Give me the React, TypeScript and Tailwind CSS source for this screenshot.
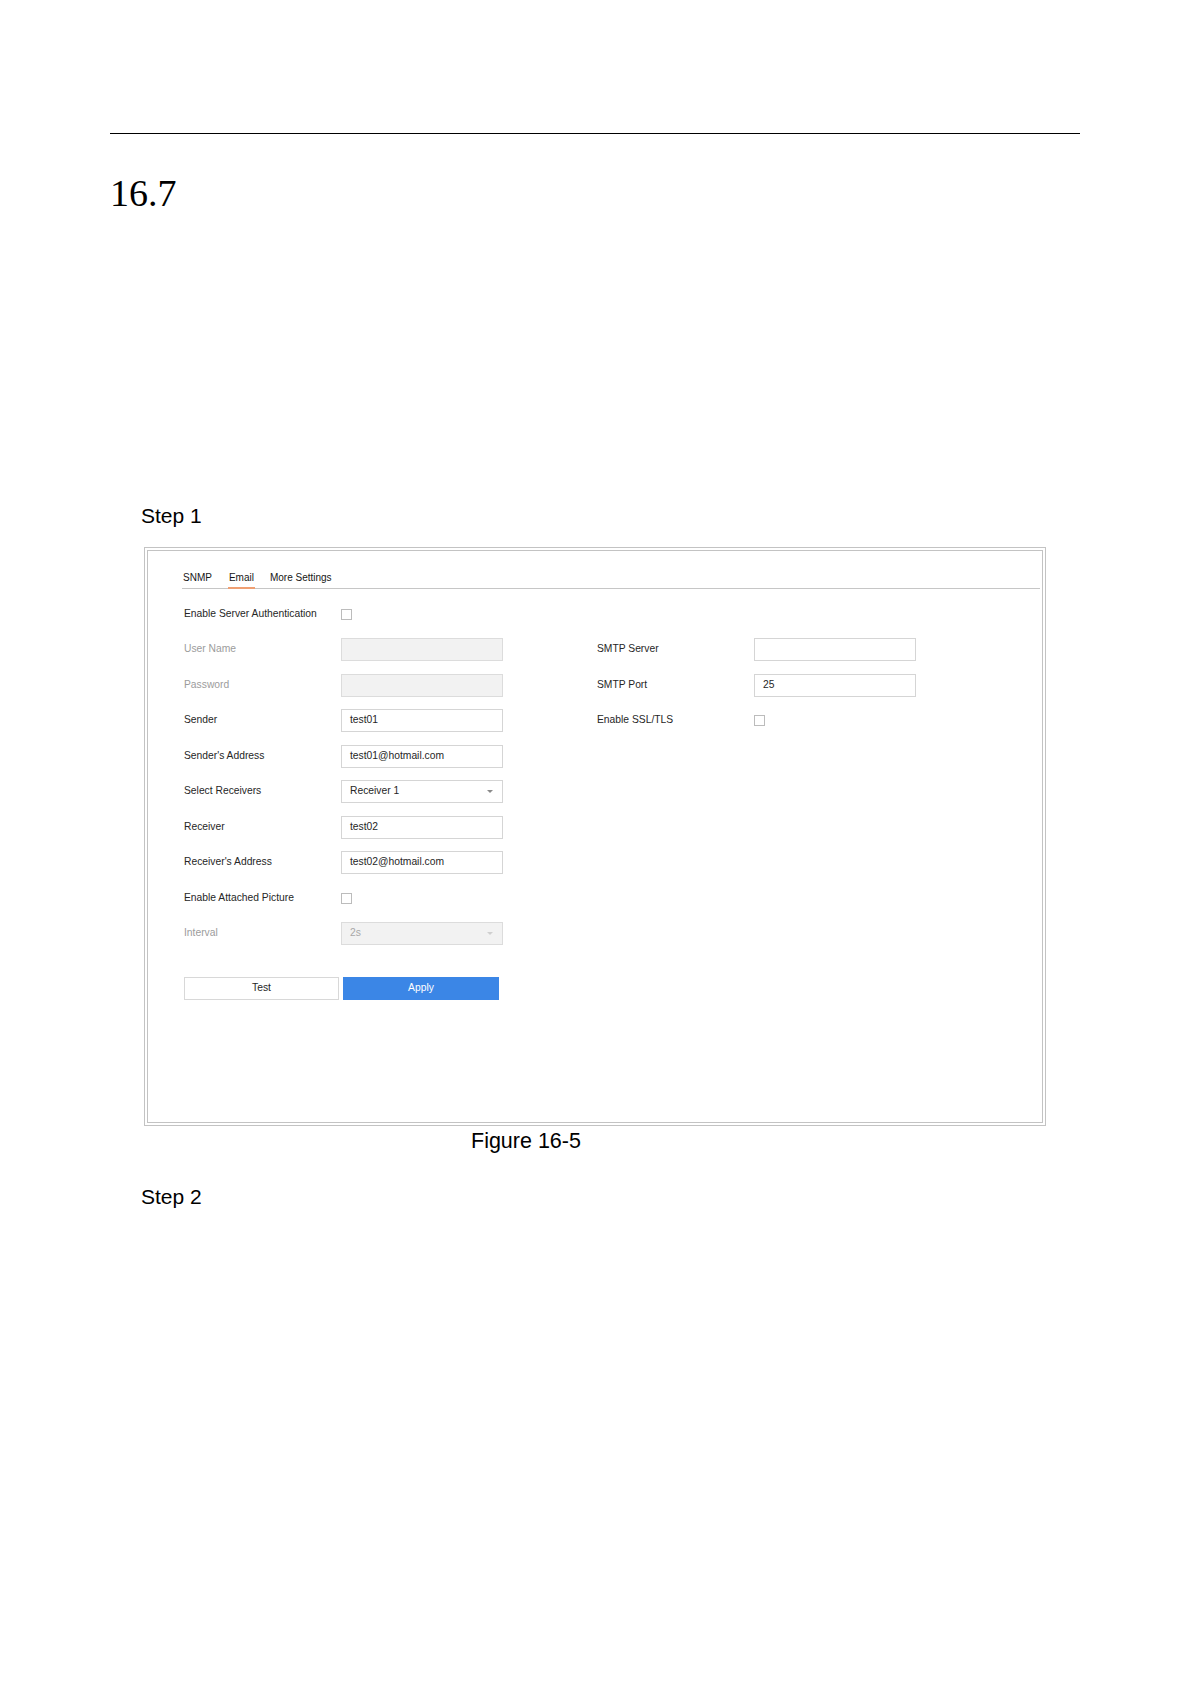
import { type ReactNode } from "react";

const sans = "font-['Liberation_Sans',Arial,sans-serif]";

function Label({ children, muted }: { children: ReactNode; muted?: boolean }) {
  return (
    <span className={`w-[157px] shrink-0 text-[10.3px] leading-none ${muted ? "text-[#9c9c9c]" : "text-[#262626]"}`}>
      {children}
    </span>
  );
}

function Field({ value, disabled, select }: { value?: string; disabled?: boolean; select?: boolean }) {
  return (
    <div
      className={`flex h-[23px] w-[162px] items-center justify-between border pl-[8px] pr-[9px] text-[10.3px] leading-none ${
        disabled ? "border-[#dcdcdc] bg-[#f2f2f2] text-[#a8a8a8]" : "border-[#d5d5d5] bg-white text-[#262626]"
      }`}
    >
      <span>{value}</span>
      {select && (
        <span
          className={`h-0 w-0 border-x-[3px] border-t-[3px] border-x-transparent ${
            disabled ? "border-t-[#cfcfcf]" : "border-t-[#8a8a8a]"
          }`}
        />
      )}
    </div>
  );
}

function Check() {
  return <div className="h-[11px] w-[11px] border border-[#bcbcbc] bg-white" />;
}

function Row({ children }: { children?: ReactNode }) {
  return <div className="flex h-[23px] items-center">{children}</div>;
}

export default function App() {
  return (
    <div className="min-h-[1684px] bg-white pl-[110px] pr-[111px] pt-[133px] text-black">
      <div className="border-t border-black" />

      <h1 className="mt-[40px] font-['Liberation_Serif','Times_New_Roman',serif] text-[38px] font-normal leading-none">
        16.7
      </h1>

      <p className={`${sans} ml-[31px] mt-[293px] text-[21px] leading-none`}>Step 1</p>

      {/* Figure 16-5: Email settings panel */}
      <div className="ml-[34px] mt-[21px] h-[579px] w-[902px] border border-[#c3c3c3] p-[2px]">
        <div className={`${sans} h-full border border-[#c3c3c3] pt-[22px]`}>
          <div className="ml-[34px] mr-[2px] flex items-end border-b border-[#c6c6c6] text-[10px] leading-none text-[#161616]">
            <span className="ml-[1px] mr-[16px] pb-[5px]">SNMP</span>
            <span className="-mb-px mr-[15px] border-b-2 border-[#ef9f72] px-[1px] pb-[4px]">Email</span>
            <span className="pb-[5px]">More Settings</span>
          </div>

          <div className="ml-[36px] mt-[13.5px] flex">
            <div className="flex w-[413px] flex-col gap-[12.5px]">
              <Row>
                <Label>Enable Server Authentication</Label>
                <Check />
              </Row>
              <Row>
                <Label muted>User Name</Label>
                <Field disabled />
              </Row>
              <Row>
                <Label muted>Password</Label>
                <Field disabled />
              </Row>
              <Row>
                <Label>Sender</Label>
                <Field value="test01" />
              </Row>
              <Row>
                <Label>Sender's Address</Label>
                <Field value="test01@hotmail.com" />
              </Row>
              <Row>
                <Label>Select Receivers</Label>
                <Field value="Receiver 1" select />
              </Row>
              <Row>
                <Label>Receiver</Label>
                <Field value="test02" />
              </Row>
              <Row>
                <Label>Receiver's Address</Label>
                <Field value="test02@hotmail.com" />
              </Row>
              <Row>
                <Label>Enable Attached Picture</Label>
                <Check />
              </Row>
              <Row>
                <Label muted>Interval</Label>
                <Field value="2s" disabled select />
              </Row>

              <div className="mt-[19.5px] flex gap-[4px] text-[10.3px] leading-none">
                <button className="flex h-[23px] w-[155px] items-center justify-center border border-[#d8d8d8] bg-white text-[#262626]">
                  Test
                </button>
                <button className="flex h-[23px] w-[156px] items-center justify-center bg-[#3b86e6] text-white">
                  Apply
                </button>
              </div>
            </div>

            <div className="flex w-[330px] flex-col gap-[12.5px]">
              <Row />
              <Row>
                <Label>SMTP Server</Label>
                <Field />
              </Row>
              <Row>
                <Label>SMTP Port</Label>
                <Field value="25" />
              </Row>
              <Row>
                <Label>Enable SSL/TLS</Label>
                <Check />
              </Row>
            </div>
          </div>
        </div>
      </div>

      <p className={`${sans} ml-[361px] mt-[5px] text-[21.5px] leading-none`}>Figure 16-5</p>

      <p className={`${sans} ml-[31px] mt-[33px] text-[21px] leading-none`}>Step 2</p>
    </div>
  );
}
